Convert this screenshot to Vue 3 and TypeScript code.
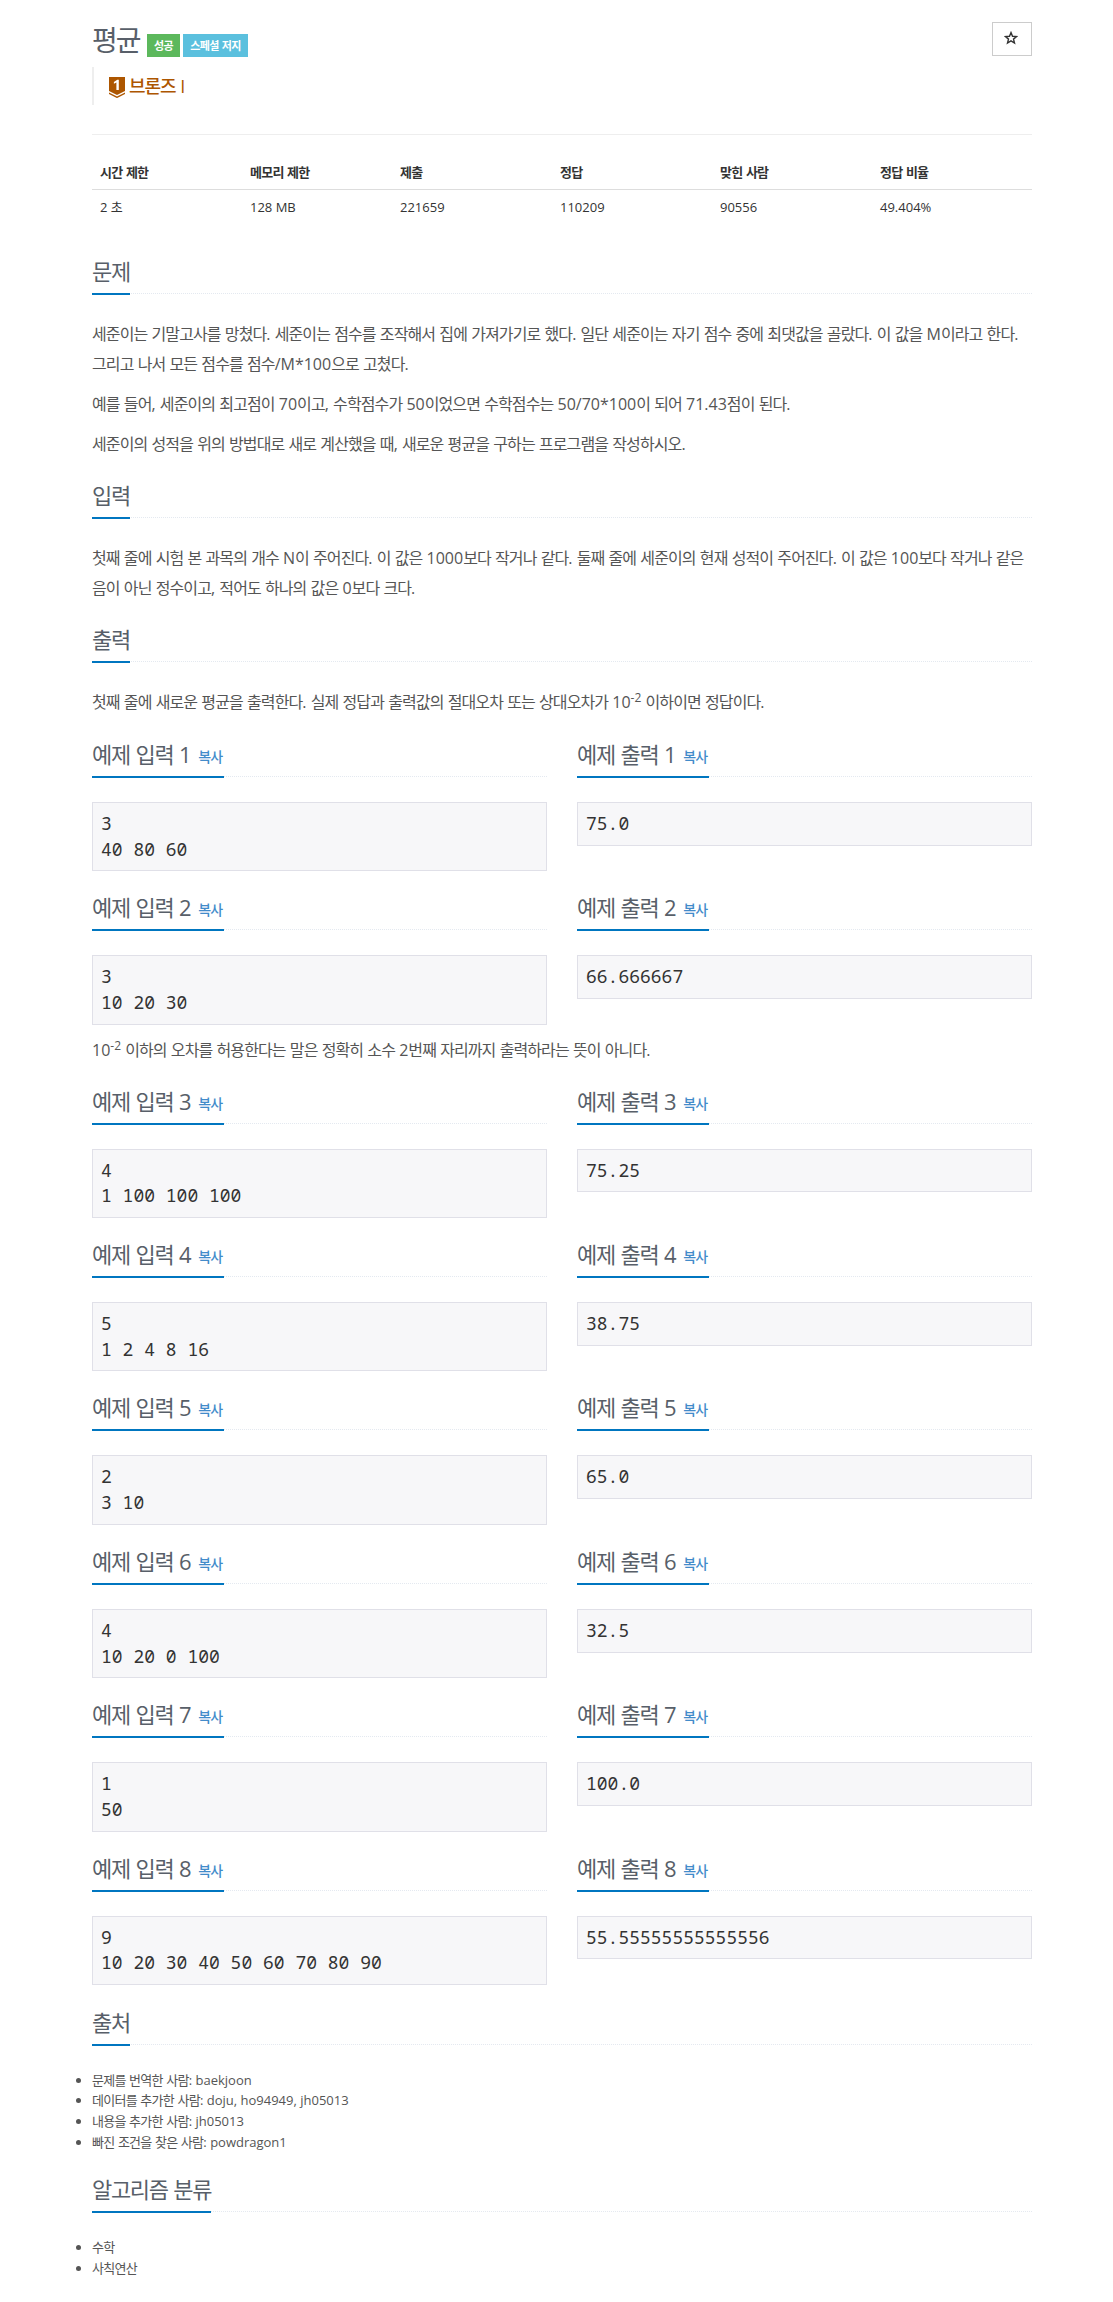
<script setup lang="ts">
import { h } from 'vue'

interface Example { id: number; input: string; output: string; note?: boolean }

// Renders text with each Hangul run wrapped, so its tracking can be tightened.
const Ko = (props: { t: string }) =>
  props.t
    .split(/([가-힣]+)/)
    .filter((part) => part !== '')
    .map((part) => (/[가-힣]/.test(part) ? h('span', { class: 'hangul' }, part) : h('span', part)))
Ko.props = ['t']

const limits: [string, string][] = [
  ['시간 제한', '2 초'],
  ['메모리 제한', '128 MB'],
  ['제출', '221659'],
  ['정답', '110209'],
  ['맞힌 사람', '90556'],
  ['정답 비율', '49.404%'],
]

const description: string[] = [
  '세준이는 기말고사를 망쳤다. 세준이는 점수를 조작해서 집에 가져가기로 했다. 일단 세준이는 자기 점수 중에 최댓값을 골랐다. 이 값을 M이라고 한다. 그리고 나서 모든 점수를 점수/M*100으로 고쳤다.',
  '예를 들어, 세준이의 최고점이 70이고, 수학점수가 50이었으면 수학점수는 50/70*100이 되어 71.43점이 된다.',
  '세준이의 성적을 위의 방법대로 새로 계산했을 때, 새로운 평균을 구하는 프로그램을 작성하시오.',
]

const inputText =
  '첫째 줄에 시험 본 과목의 개수 N이 주어진다. 이 값은 1000보다 작거나 같다. 둘째 줄에 세준이의 현재 성적이 주어진다. 이 값은 100보다 작거나 같은 음이 아닌 정수이고, 적어도 하나의 값은 0보다 크다.'

const examples: Example[] = [
  { id: 1, input: '3\n40 80 60', output: '75.0' },
  { id: 2, input: '3\n10 20 30', output: '66.666667', note: true },
  { id: 3, input: '4\n1 100 100 100', output: '75.25' },
  { id: 4, input: '5\n1 2 4 8 16', output: '38.75' },
  { id: 5, input: '2\n3 10', output: '65.0' },
  { id: 6, input: '4\n10 20 0 100', output: '32.5' },
  { id: 7, input: '1\n50', output: '100.0' },
  { id: 8, input: '9\n10 20 30 40 50 60 70 80 90', output: '55.55555555555556' },
]

const sources: string[] = [
  '문제를 번역한 사람: baekjoon',
  '데이터를 추가한 사람: doju, ho94949, jh05013',
  '내용을 추가한 사람: jh05013',
  '빠진 조건을 찾은 사람: powdragon1',
]
const tags: string[] = ['수학', '사칙연산']
</script>

<template>
  <main class="page">
    <header class="top">
      <div class="title-row">
        <h1><Ko t="평균" /></h1>
        <span class="label success"><Ko t="성공" /></span>
        <span class="label info"><Ko t="스페셜 저지" /></span>
      </div>
      <button class="star" type="button" aria-label="즐겨찾기">
        <svg width="14" height="14" viewBox="0 0 14 14">
          <path d="M7 1.6 8.5 5.3 12.6 5.6 9.5 8.1 10.5 12.1 7 9.9 3.5 12.1 4.5 8.1 1.4 5.6 5.5 5.3Z" fill="none" stroke="#333" stroke-width="1.4" />
        </svg>
      </button>
    </header>

    <blockquote class="tier">
      <svg class="medal" width="16" height="21" viewBox="0 0 16 21">
        <path d="M0 0H16V14L8 18L0 14Z" fill="#ad5600" />
        <path d="M0 15.6 8 19.6 16 15.6V17.1L8 21.1L0 17.1Z" fill="#ad5600" />
        <path d="M4.9 4.9 8.3 2.7H9.8V13H7.4V5.5L4.9 6.8Z" fill="#fff" />
      </svg>
      <Ko t="브론즈 I" />
    </blockquote>

    <table class="limits">
      <thead>
        <tr><th v-for="c in limits" :key="c[0]"><Ko :t="c[0]" /></th></tr>
      </thead>
      <tbody>
        <tr><td v-for="c in limits" :key="c[0]"><Ko :t="c[1]" /></td></tr>
      </tbody>
    </table>

    <section class="first">
      <div class="headline"><h2><Ko t="문제" /></h2></div>
      <p v-for="p in description" :key="p"><Ko :t="p" /></p>
    </section>
    <section>
      <div class="headline"><h2><Ko t="입력" /></h2></div>
      <p><Ko :t="inputText" /></p>
    </section>
    <section>
      <div class="headline"><h2><Ko t="출력" /></h2></div>
      <p class="with-sup"><Ko t="첫째 줄에 새로운 평균을 출력한다. 실제 정답과 출력값의 절대오차 또는 상대오차가 10" /><sup>-2</sup><Ko t=" 이하이면 정답이다." /></p>
    </section>

    <template v-for="e in examples" :key="e.id">
      <div class="pair">
        <section>
          <div class="headline">
            <h2><Ko :t="`예제 입력 ${e.id} `" /><a class="copy"><Ko t="복사" /></a></h2>
          </div>
          <pre>{{ e.input }}</pre>
        </section>
        <section>
          <div class="headline">
            <h2><Ko :t="`예제 출력 ${e.id} `" /><a class="copy"><Ko t="복사" /></a></h2>
          </div>
          <pre>{{ e.output }}</pre>
        </section>
      </div>
      <p v-if="e.note"><Ko t="10" /><sup>-2</sup><Ko t=" 이하의 오차를 허용한다는 말은 정확히 소수 2번째 자리까지 출력하라는 뜻이 아니다." /></p>
    </template>

    <section class="credits">
      <div class="headline"><h2><Ko t="출처" /></h2></div>
      <ul><li v-for="s in sources" :key="s"><Ko :t="s" /></li></ul>
    </section>
    <section>
      <div class="headline"><h2><Ko t="알고리즘 분류" /></h2></div>
      <ul><li v-for="s in tags" :key="s"><Ko :t="s" /></li></ul>
    </section>
  </main>
</template>

<style>
body { background: #fff; }
.hangul { letter-spacing: -0.0555em; }
h1 .hangul { letter-spacing: -0.075em; }
h2 > .hangul { letter-spacing: -0.061em; }
</style>

<style scoped>
.page {
  box-sizing: border-box;
  width: 940px;
  min-height: 2302px;
  margin: 0 0 0 92px;
  font-family: "Open Sans", "Noto Sans CJK KR", sans-serif;
  font-size: 13px;
  line-height: 1.6;
  color: #555;
}
.top { display: flex; justify-content: space-between; height: 67px; }
.title-row { display: flex; align-items: flex-start; }
h1 { width: 48px; margin: 19px 7px 0 0; font-size: 28px; font-weight: 400; line-height: 42px; white-space: nowrap; color: #585f69; }
.label {
  width: 33px;
  height: 23px;
  margin: 34px 3px 0 0;
  font-size: 11px;
  font-weight: 700;
  line-height: 23px;
  text-align: center;
  white-space: nowrap;
  color: #fff;
}
.success { background: #5cb85c; }
.info { width: 65px; background: #5bc0de; }
.star {
  display: flex;
  align-items: center;
  justify-content: center;
  box-sizing: border-box;
  width: 40px;
  height: 34px;
  margin: 22px 0 0;
  padding: 0 2px 2px 0;
  border: 1px solid #ccc;
  background: #fff;
}
.tier {
  display: flex;
  box-sizing: border-box;
  height: 38px;
  margin: 0;
  padding-left: 15px;
  border-left: 2px solid #eee;
  font-size: 18px;
  font-weight: 500;
  line-height: 38px;
  white-space: pre;
  color: #ad5600;
}
.medal { margin: 10px 4px 0 0; }
.limits {
  width: 940px;
  margin-top: 29px;
  border-top: 1px solid #eee;
  border-collapse: separate;
  border-spacing: 0;
  table-layout: fixed;
  color: #333;
}
.limits th, .limits td { width: 144px; padding: 0 8px; text-align: left; line-height: 20px; }
.limits th:nth-child(-n + 2) { width: 134px; }
.limits th { height: 27px; padding-top: 27px; vertical-align: top; border-bottom: 1px solid #ddd; }
.limits td { height: 28px; padding-top: 7px; vertical-align: top; }
section { display: flow-root; }
.first { margin-top: 20px; }
.credits { margin-top: 10.6px; }
.headline { display: flex; margin: 10px 0 25px; border-bottom: 1px dotted #e4e9f0; }
.headline h2 {
  height: 33px;
  margin: 0 0 -2px;
  padding-bottom: 5px;
  border-bottom: 2px solid #0076c0;
  font-size: 22px;
  font-weight: 400;
  line-height: 33px;
  white-space: pre;
  color: #585f69;
}
.copy { padding: 0 1.5px 0 0.8px; font-size: 14px; font-weight: 500; line-height: 1; vertical-align: 1px; color: #428bca; }
p { margin: 0 0 10px; font-size: 16px; line-height: 30px; }
.with-sup { height: 30.8px; }
sup { position: relative; top: -0.5em; vertical-align: baseline; font-size: 75%; line-height: 0; }
.pair { display: grid; grid-template-columns: 455px 455px; column-gap: 30px; }
.pair pre { margin-bottom: 10px; }
.pair + .credits { margin-top: 0.6px; }
pre {
  box-sizing: border-box;
  margin: 0;
  padding: 8px;
  border: 1px solid #e0e0e8;
  background: #f7f7f9;
  font-family: "Noto Sans Mono", "DejaVu Sans Mono", monospace;
  font-size: 18px;
  line-height: 25.71px;
  color: #333;
}
ul { margin: 0 0 10px; padding: 0; }
li { font-size: 13px; line-height: 20.8px; }
</style>
